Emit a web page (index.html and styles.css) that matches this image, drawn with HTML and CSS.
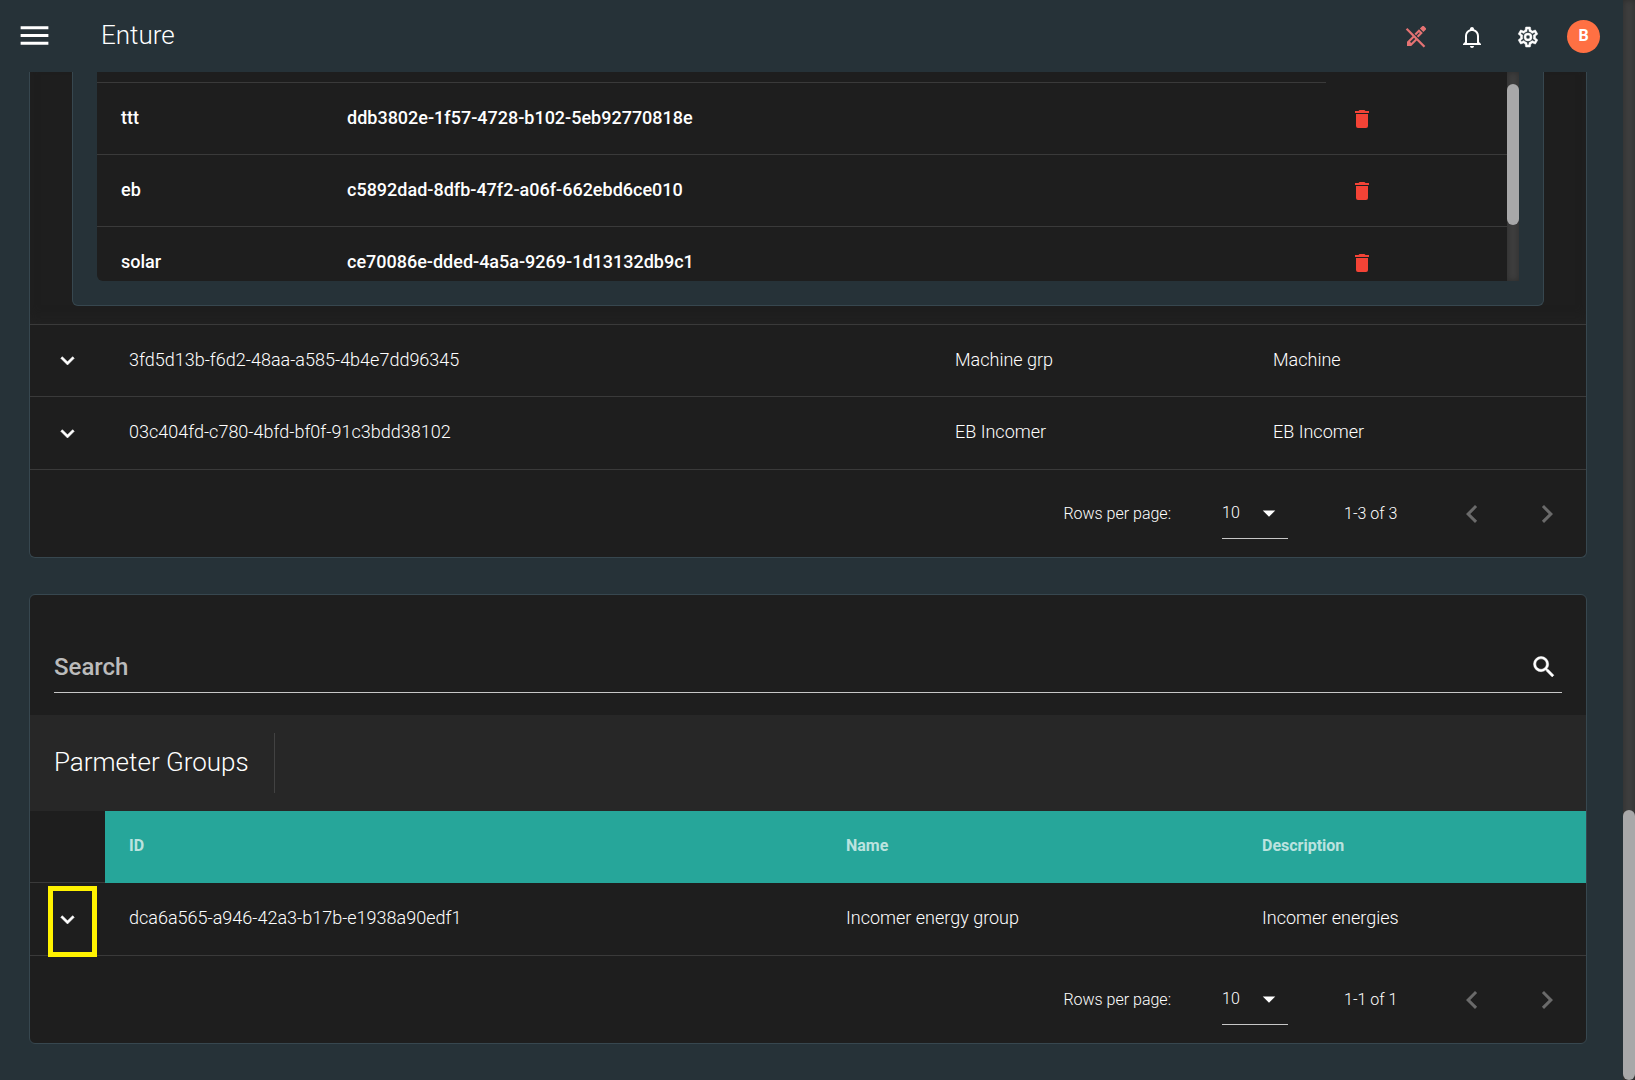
FILE: index.html
```html
<!DOCTYPE html>
<html lang="en">
<head>
<meta charset="utf-8">
<title>Enture</title>
<link rel="stylesheet" href="styles.css">
</head>
<body>
<div class="app">
  <div class="page">
    <header class="topbar">
      <button class="icon-btn menu-btn" type="button" aria-label="Menu"><svg class="icon-menu" viewBox="0 0 24 24"><path d="M3 6h18v2H3V6m0 5h18v2H3v-2m0 5h18v2H3v-2z"/></svg></button>
      <h1 class="brand">Enture</h1>
      <nav class="actions">
        <button class="icon-btn edit-off" type="button" aria-label="Editing off"><svg class="icon" viewBox="0 0 24 24"><path d="M1.800 4.600 3.400 3 21.300 20.900 19.700 22.500z"/><path d="M21.700 4.800c.5-.5.500-1.300 0-1.800l-1.700-1.700c-.5-.5-1.300-.5-1.800 0L15.900 3.600l3.500 3.500zM15 4.200 10.500 8.700l1.500 1.500 3-3 .8.800-3 3 1.500 1.500 4.500-4.500zM8.800 11 3 16.800V21h4.200l5.800-5.800-1.500-1.500-4.300 4.300-1.200-1.200 4.300-4.300z"/></svg></button>
        <button class="icon-btn" type="button" aria-label="Notifications"><svg class="icon" viewBox="0 0 24 24"><path d="M10 21h4c0 1.100-.9 2-2 2s-2-.9-2-2m11-2v1H3v-1l2-2v-6c0-3.100 2-5.800 5-6.700V4c0-1.100.9-2 2-2s2 .9 2 2v.3c3 .9 5 3.600 5 6.700v6l2 2m-4-8c0-2.800-2.200-5-5-5s-5 2.200-5 5v7h10v-7z"/></svg></button>
        <button class="icon-btn" type="button" aria-label="Settings"><svg class="icon cog" viewBox="0 0 24 24"><path d="M12 8a4 4 0 0 1 4 4 4 4 0 0 1-4 4 4 4 0 0 1-4-4 4 4 0 0 1 4-4m0 2a2 2 0 0 0-2 2 2 2 0 0 0 2 2 2 2 0 0 0 2-2 2 2 0 0 0-2-2m-2 12c-.25 0-.46-.18-.5-.42l-.37-2.650c-.63-.25-1.170-.59-1.690-.99l-2.490 1.010c-.22.080-.49 0-.61-.22l-2-3.460c-.13-.22-.070-.49.120-.64l2.110-1.660L4.500 12l.070-1-2.110-1.630c-.19-.15-.25-.42-.120-.64l2-3.460c.12-.22.390-.31.610-.22l2.490 1c.52-.39 1.060-.73 1.690-.98l.37-2.650c.04-.24.25-.42.5-.42h4c.25 0 .46.180.5.420l.37 2.650c.63.250 1.170.590 1.690.980l2.490-1c.22-.090.490 0 .610.220l2 3.460c.13.220.070.490-.120.640L19.430 11l.070 1-.070 1 2.110 1.630c.19.150.25.420.120.640l-2 3.460c-.12.220-.390.310-.610.220l-2.490-1c-.52.390-1.060.730-1.690.980l-.37 2.650c-.04.240-.25.420-.5.420h-4m1.250-18-.37 2.610c-1.200.250-2.260.890-3.030 1.780L5.440 7.350l-.75 1.300L6.800 10.200a5.550 5.550 0 0 0 0 3.600l-2.120 1.560.75 1.300 2.430-1.040c.77.880 1.820 1.520 3.010 1.760l.37 2.620h1.520l.37-2.610c1.190-.25 2.240-.89 3.010-1.770l2.430 1.040.75-1.300-2.120-1.550c.4-1.170.4-2.440 0-3.610l2.110-1.550-.75-1.300-2.410 1.040a5.420 5.420 0 0 0-3.030-1.770L12.750 4h-1.500z"/></svg></button>
        <button class="avatar" type="button">B</button>
      </nav>
    </header>

    <main class="content">
      <section class="card card-top">
        <div class="expanded">
          <div class="panel">
            <div class="nested">
              <table class="nested-table">
                <colgroup><col class="c-label"><col><col class="c-del"></colgroup>
                <tbody>
                  <tr class="cut-row"><td></td><td></td><td></td></tr>
                  <tr><td>ttt</td><td>ddb3802e-1f57-4728-b102-5eb92770818e</td><td class="icon-cell"><button class="icon-btn del" type="button" aria-label="Delete ttt"><svg class="icon" viewBox="0 0 24 24"><path d="M19 4h-3.500l-1-1h-5l-1 1H5v2h14M6 19a2 2 0 0 0 2 2h8a2 2 0 0 0 2-2V7H6v12z"/></svg></button></td></tr>
                  <tr><td>eb</td><td>c5892dad-8dfb-47f2-a06f-662ebd6ce010</td><td class="icon-cell"><button class="icon-btn del" type="button" aria-label="Delete eb"><svg class="icon" viewBox="0 0 24 24"><path d="M19 4h-3.500l-1-1h-5l-1 1H5v2h14M6 19a2 2 0 0 0 2 2h8a2 2 0 0 0 2-2V7H6v12z"/></svg></button></td></tr>
                  <tr class="last-row"><td>solar</td><td>ce70086e-dded-4a5a-9269-1d13132db9c1</td><td class="icon-cell"><button class="icon-btn del" type="button" aria-label="Delete solar"><svg class="icon" viewBox="0 0 24 24"><path d="M19 4h-3.500l-1-1h-5l-1 1H5v2h14M6 19a2 2 0 0 0 2 2h8a2 2 0 0 0 2-2V7H6v12z"/></svg></button></td></tr>
                </tbody>
              </table>
              <div class="rail nested-rail"><div class="thumb nested-thumb"></div></div>
            </div>
          </div>
        </div>
        <table class="grid">
          <colgroup><col class="c-exp"><col><col class="c-name-a"><col class="c-desc-a"></colgroup>
          <tbody>
            <tr><td class="icon-cell"><button class="icon-btn" type="button" aria-label="Expand"><svg class="icon-expand" viewBox="0 0 24 24"><path d="M7.410 8.580 12 13.170l4.590-4.590L18 10l-6 6-6-6 1.410-1.420z"/></svg></button></td><td>3fd5d13b-f6d2-48aa-a585-4b4e7dd96345</td><td>Machine grp</td><td>Machine</td></tr>
            <tr><td class="icon-cell"><button class="icon-btn" type="button" aria-label="Expand"><svg class="icon-expand" viewBox="0 0 24 24"><path d="M7.410 8.580 12 13.170l4.590-4.590L18 10l-6 6-6-6 1.410-1.420z"/></svg></button></td><td>03c404fd-c780-4bfd-bf0f-91c3bdd38102</td><td>EB Incomer</td><td>EB Incomer</td></tr>
          </tbody>
        </table>
        <footer class="pager">
          <label for="rows-a">Rows per page:</label>
          <span class="select"><select id="rows-a"><option>10</option></select><svg class="caret" viewBox="0 0 24 24"><path d="m7 10 5 5 5-5H7z"/></svg></span>
          <span class="range">1-3 of 3</span>
          <button class="icon-btn page-btn" type="button" disabled aria-label="Previous page"><svg class="icon-page" viewBox="0 0 24 24"><path d="M15.410 16.580 10.830 12l4.580-4.590L14 6l-6 6 6 6 1.410-1.420z"/></svg></button>
          <button class="icon-btn page-btn" type="button" disabled aria-label="Next page"><svg class="icon-page" viewBox="0 0 24 24"><path d="M8.590 16.580 13.170 12 8.590 7.410 10 6l6 6-6 6-1.410-1.420z"/></svg></button>
        </footer>
      </section>

      <section class="card">
        <div class="search">
          <input type="text" placeholder="Search" aria-label="Search">
          <svg class="icon-search" viewBox="0 0 24 24"><path d="M9.500 3A6.500 6.500 0 0 1 16 9.500c0 1.610-.59 3.090-1.560 4.230l.27.270h.79l5 5-1.500 1.500-5-5v-.79l-.27-.27A6.516 6.516 0 0 1 9.500 16 6.500 6.500 0 0 1 3 9.500 6.500 6.500 0 0 1 9.500 3m0 2C7 5 5 7 5 9.500S7 14 9.500 14 14 12 14 9.500 12 5 9.500 5z"/></svg>
        </div>
        <div class="toolbar"><h2>Parmeter Groups</h2></div>
        <table class="grid">
          <colgroup><col class="c-exp"><col><col class="c-name-b"><col class="c-desc-b"></colgroup>
          <thead><tr><td></td><th>ID</th><th>Name</th><th>Description</th></tr></thead>
          <tbody>
            <tr><td class="icon-cell marked"><button class="icon-btn" type="button" aria-label="Expand"><svg class="icon-expand" viewBox="0 0 24 24"><path d="M7.410 8.580 12 13.170l4.590-4.590L18 10l-6 6-6-6 1.410-1.420z"/></svg></button><span class="marker"></span></td><td>dca6a565-a946-42a3-b17b-e1938a90edf1</td><td>Incomer energy group</td><td>Incomer energies</td></tr>
          </tbody>
        </table>
        <footer class="pager">
          <label for="rows-b">Rows per page:</label>
          <span class="select"><select id="rows-b"><option>10</option></select><svg class="caret" viewBox="0 0 24 24"><path d="m7 10 5 5 5-5H7z"/></svg></span>
          <span class="range">1-1 of 1</span>
          <button class="icon-btn page-btn" type="button" disabled aria-label="Previous page"><svg class="icon-page" viewBox="0 0 24 24"><path d="M15.410 16.580 10.830 12l4.580-4.590L14 6l-6 6 6 6 1.410-1.420z"/></svg></button>
          <button class="icon-btn page-btn" type="button" disabled aria-label="Next page"><svg class="icon-page" viewBox="0 0 24 24"><path d="M8.590 16.580 13.170 12 8.590 7.410 10 6l6 6-6 6-1.410-1.420z"/></svg></button>
        </footer>
      </section>
    </main>
  </div>
  <div class="rail"><div class="thumb page-thumb"></div></div>
</div>
</body>
</html>
```
FILE: styles.css
```css
* { box-sizing: border-box; }

body {
  margin: 0;
  background: #263238;
  color: #fff;
  font-family: Roboto, sans-serif;
  font-size: 18px;
  font-weight: 300;
  line-height: 24px;
}

.app { display: flex; min-height: 100vh; }
.page { flex: 1; min-width: 0; }

button, input, select { font: inherit; color: inherit; }

svg { display: block; fill: currentColor; }
.icon { width: 24px; height: 24px; }
.icon-menu { width: 37px; height: 37px; }
.icon-page { width: 36px; height: 36px; }
.icon-search { width: 28px; height: 28px; stroke: currentColor; stroke-width: .4; }
.icon-expand { width: 27px; height: 27px; stroke: currentColor; stroke-width: .5; }
.caret { width: 30px; height: 30px; }
.cog { stroke: currentColor; stroke-width: .5; }

.icon-btn {
  display: inline-block;
  padding: 0;
  border: 0;
  background: none;
  vertical-align: middle;
}

/* Top bar */
.topbar {
  display: flex;
  align-items: center;
  height: 72px;
  padding: 0 23px 0 16px;
}
.menu-btn, .brand { padding-bottom: 2px; }
.brand {
  margin: 0 0 0 48px;
  font-size: 26px;
  font-weight: 300;
  line-height: 32px;
}
.actions {
  display: flex;
  align-items: center;
  gap: 32px;
  margin-left: auto;
}
.actions .icon-btn { padding-top: 2px; }
.edit-off { color: #e57373; }
.avatar {
  width: 33px;
  height: 33px;
  margin-left: -5px;
  padding: 0;
  border: 0;
  border-radius: 50%;
  background: #ff7043;
  font-size: 16px;
  font-weight: 700;
}

/* Cards */
.content {
  display: flex;
  flex-direction: column;
  gap: 36px;
  padding: 0 36px 36px 29px;
}
.card {
  overflow: hidden;
  border: 1px solid #37474f;
  border-radius: 6px;
  background: #1e1e1e;
}
.card-top { border-top: 0; border-radius: 0 0 6px 6px; }

.expanded {
  padding: 0 42px 18px;
  border-bottom: 1px solid #3a3a3a;
  box-shadow: inset 0 -8px 16px -8px #242424;
}
.panel {
  padding: 0 24px 24px;
  border: 1px solid #37474f;
  border-top: 0;
  border-radius: 0 0 6px 6px;
  background: #263238;
}
.nested {
  display: flex;
  overflow: hidden;
  border-radius: 0 0 0 6px;
  background: #1e1e1e;
}
.nested-table {
  flex: 1;
  border-collapse: separate;
  border-spacing: 0;
  table-layout: fixed;
  font-weight: 500;
}
.nested-table td {
  height: 72px;
  padding: 0 24px 2px;
  border-bottom: 1px solid #3a3a3a;
}
.nested-table .cut-row td { height: 11px; }
.nested-table .cut-row td:last-child { border-bottom: 0; }
.nested-table .last-row td {
  height: 54px;
  padding-top: 18px;
  border-bottom: 0;
}
.nested-table .icon-cell, .grid .icon-cell { padding-bottom: 0; }
.nested-table .last-row .icon-cell { padding-top: 16px; }
.c-label { width: 226px; }
.c-del { width: 181px; }
.del { color: #f44336; }

/* Data tables */
.grid {
  width: 100%;
  border-collapse: separate;
  border-spacing: 0;
  table-layout: fixed;
}
.grid td, .grid th {
  height: 72px;
  padding: 0 24px 2px;
  border-bottom: 1px solid #3a3a3a;
  text-align: left;
}
.grid tbody tr:last-child td { height: 73px; }
.grid th {
  border-bottom-color: #26a69a;
  background: #26a69a;
  color: rgba(255, 255, 255, .7);
  font-size: 16px;
  font-weight: 700;
}
.c-exp { width: 75px; }
.c-name-a { width: 318px; }
.c-desc-a { width: 337px; }
.c-name-b { width: 416px; }
.c-desc-b { width: 348px; }

.marked { position: relative; }
.marker {
  position: absolute;
  top: 3px;
  left: 18px;
  width: 49px;
  height: 71px;
  border: 5px solid #fff200;
}

/* Pager */
.pager {
  display: flex;
  align-items: center;
  justify-content: flex-end;
  height: 87px;
  padding-right: 21px;
  font-size: 16px;
}
.select {
  display: flex;
  align-items: center;
  width: 66px;
  height: 50px;
  margin: 0 56px 0 51px;
  border-bottom: 1px solid #c7c7c7;
}
.select select {
  width: 32px;
  padding: 0;
  border: 0;
  background: none;
  appearance: none;
}
.range { width: 110px; }
.page-btn { color: #6a6a6a; }
.page-btn + .page-btn { margin-left: 39px; }

/* Search and toolbar */
.search {
  display: flex;
  align-items: center;
  height: 48px;
  margin: 50px 24px 22px;
  padding: 0 4px 4px 0;
  border-bottom: 1px solid #c7c7c7;
}
.search input {
  flex: 1;
  padding: 0;
  border: 0;
  outline: 0;
  background: none;
  font-size: 24px;
  font-weight: 500;
}
.search input::placeholder { color: #bbb; opacity: 1; }
.toolbar {
  display: flex;
  align-items: center;
  height: 96px;
  padding-left: 24px;
  background: #272727;
}
.toolbar h2 {
  margin: 0;
  padding: 0 25px 2px 0;
  border-right: 1px solid #424242;
  font-size: 26px;
  font-weight: 300;
  line-height: 58px;
}

/* Scrollbars */
.rail {
  display: flex;
  flex-direction: column;
  width: 12px;
  background: #3e3e3e;
  box-shadow: inset 0 0 6px rgba(0, 0, 0, .3);
}
.thumb { border-radius: 6px; background: #a8a8a9; }
.page-thumb { height: 25%; margin-top: auto; }
.nested-thumb { height: 141px; margin-top: 12px; }
```
